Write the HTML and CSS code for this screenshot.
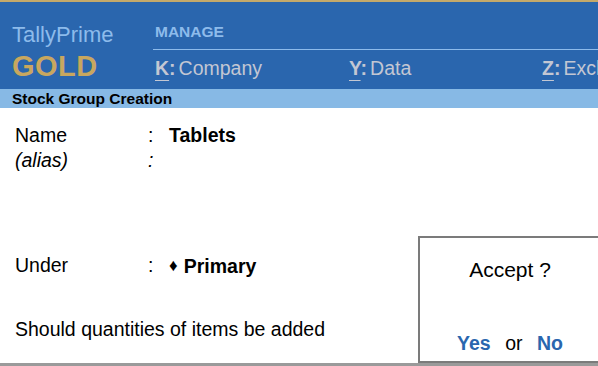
FILE: index.html
```html
<!DOCTYPE html>
<html lang="en">
<head>
  <meta charset="UTF-8">
  <title>Stock Group Creation</title>
  <link rel="stylesheet" href="styles.css">
</head>
<body>
  <div class="app">
    <header class="topbar">
      <div class="brand">
        <div class="brand-name">TallyPrime</div>
        <div class="brand-edition">GOLD</div>
      </div>
      <nav class="menu">
        <div class="menu-title">MANAGE</div>
        <div class="menu-keys">
          <span class="menu-item"><span class="hotkey"><u>K</u>:</span>Company</span>
          <span class="menu-item"><span class="hotkey"><u>Y</u>:</span>Data</span>
          <span class="menu-item"><span class="hotkey"><u>Z</u>:</span>Exchange</span>
        </div>
      </nav>
    </header>

    <div class="screen-title">Stock Group Creation</div>

    <main class="form">
      <div class="row">
        <span class="label">Name</span>
        <span class="colon">:</span>
        <span class="value">Tablets</span>
      </div>
      <div class="row alias">
        <span class="label">(alias)</span>
        <span class="colon">:</span>
        <span class="value"></span>
      </div>
      <div class="row under">
        <span class="label">Under</span>
        <span class="colon">:</span>
        <span class="value"><span class="bullet">&#9830;</span>Primary</span>
      </div>
      <div class="row question">
        <span class="label wide">Should quantities of items be added</span>
      </div>
    </main>

    <div class="accept-box">
      <div class="accept-title">Accept ?</div>
      <div class="accept-choices">
        <span class="choice">Yes</span>
        <span class="or">or</span>
        <span class="choice">No</span>
      </div>
    </div>

    <footer class="status"></footer>
  </div>
</body>
</html>
```

FILE: styles.css
```css
body {
  margin: 0;
  font-family: 'Liberation Sans', Arial, sans-serif;
  background: #fff;
  color: #000;
  overflow: hidden;
}
.app {
  position: relative;
  width: 598px;
  height: 366px;
  overflow: hidden;
  display: flex;
  flex-direction: column;
}
.topbar {
  display: flex;
  height: 87px;
  background: #2a66ae;
  border-top: 2px solid #c4a96a;
  flex-shrink: 0;
}
.brand {
  width: 141px;
  flex-shrink: 0;
  padding: 21px 0 0 12px;
}
.brand-name {
  font-size: 22px;
  line-height: 24px;
  color: #8dbbeb;
}
.brand-edition {
  margin-top: 4px;
  font-size: 29px;
  line-height: 30px;
  font-weight: 700;
  color: #c8a75f;
  letter-spacing: 0.5px;
}
.menu {
  flex: 1;
  min-width: 0;
  display: flex;
  flex-direction: column;
}
.menu-title {
  padding: 21px 0 8px 2px;
  font-size: 15.5px;
  line-height: 18px;
  font-weight: 700;
  color: #8dbbeb;
  border-bottom: 1px solid #8dbbeb;
}
.menu-keys {
  display: grid;
  grid-template-columns: 194px 193px 194px;
  margin-top: 7px;
  padding-left: 2px;
  font-size: 19.5px;
  line-height: 22px;
  color: #c3c7d3;
  white-space: nowrap;
}
.hotkey {
  font-weight: 700;
  margin-right: 3px;
}
.hotkey u {
  text-decoration-thickness: 1px;
  text-underline-offset: 5px;
}
.screen-title {
  height: 19px;
  line-height: 19px;
  padding-left: 12px;
  font-size: 15.5px;
  font-weight: 700;
  background: #87b9e5;
  flex-shrink: 0;
}
.form {
  flex: 1;
  padding: 15px 0 0 15px;
}
.row {
  display: flex;
  font-size: 19.5px;
  line-height: 25px;
}
.label {
  width: 133px;
}
.label.wide {
  width: auto;
}
.colon {
  width: 21px;
}
.value {
  font-weight: 700;
}
.alias .label,
.alias .colon {
  font-style: italic;
}
.under {
  margin-top: 80px;
}
.bullet {
  font-size: 17px;
  font-weight: 400;
  margin-right: 6px;
  vertical-align: 2px;
}
.question {
  margin-top: 38px;
}
.accept-box {
  position: absolute;
  left: 418px;
  top: 236px;
  width: 180px;
  height: 123px;
  border: 2px solid #7b7b7b;
  background: #fff;
  text-align: center;
}
.accept-title {
  margin-top: 21px;
  font-size: 21px;
  line-height: 22px;
}
.accept-choices {
  margin-top: 51px;
  font-size: 19.5px;
  line-height: 22px;
}
.choice {
  font-weight: 700;
  color: #2a66ae;
}
.or {
  margin: 0 9px;
}
.status {
  height: 3px;
  background: #9a9a9a;
  flex-shrink: 0;
}
```
